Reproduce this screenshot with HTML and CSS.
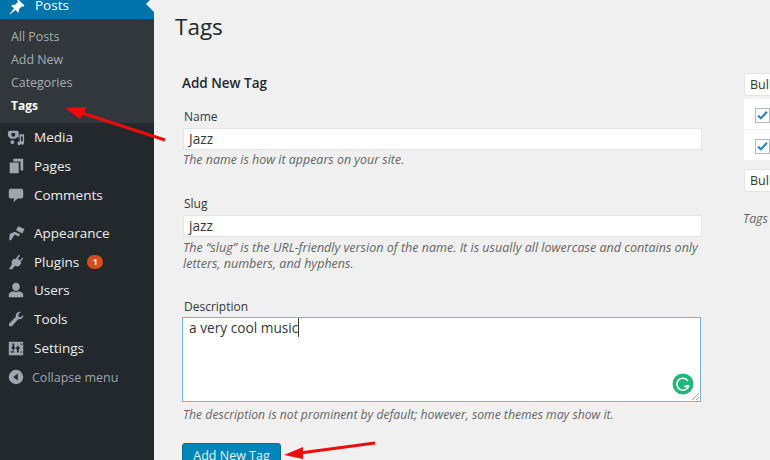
FILE: index.html
```html
<!DOCTYPE html>
<html lang="en">
<head>
<meta charset="utf-8">
<title>Tags</title>
<link rel="stylesheet" href="styles.css">
</head>
<body>
<div class="page">
  <nav class="sidebar">
    <div class="current">
      <svg class="icon pin" viewBox="0 0 20 20"><path fill="#fff" d="M10.400 1.600l8 8-1.400 1.100-1.500-.5-3.300 3.300c.4 1.600.1 3-.8 4.100l-3.200-3.200-5.700 4.800-.6-.6 4.800-5.700-3.200-3.200c1.100-.9 2.500-1.200 4.100-.8l3.300-3.300-.5-1.500z"/></svg>
      <span>Posts</span>
      <i class="notch"></i>
    </div>
    <ul class="submenu">
      <li>All Posts</li>
      <li>Add New</li>
      <li>Categories</li>
      <li class="on">Tags</li>
    </ul>
    <ul class="menu">
      <li><svg class="icon" viewBox="0 0 20 20"><path fill-rule="evenodd" d="M2 3h10l1 2v5.500H10.500A3 3 0 0 1 8 12H4L1 9V5zm5 2.200a2.300 2.300 0 1 0 0 4.600 2.300 2.300 0 0 0 0-4.600z"/><path d="M6 13.500a2.200 2.200 0 1 1-.1 4.400 2.200 2.200 0 0 1 .1-4.400zM14 7h5v9.500a2 2 0 1 1-1.500-1.900V9.500h-2v7.500a2 2 0 1 1-1.500-1.900z"/></svg><span>Media</span></li>
      <li><svg class="icon" viewBox="0 0 20 20"><path d="M7 2h11v13h-3V5H7zM3 6h10v12H3z"/></svg><span>Pages</span></li>
      <li class="gap"><svg class="icon" viewBox="0 0 20 20"><path d="M4 3h12a2 2 0 0 1 2 2v7a2 2 0 0 1-2 2h-4l-5 4 1-4H4a2 2 0 0 1-2-2V5a2 2 0 0 1 2-2z"/></svg><span>Comments</span></li>
      <li><svg class="icon" viewBox="0 0 20 20"><path d="M12.500 2.500l7 3-2.500 5-7-3.500zM8.500 8.500l6 3-1.500 2.500-4.500-2.200L4.500 18H2.500L3 11z"/></svg><span>Appearance</span></li>
      <li><svg class="icon" viewBox="0 0 20 20"><path d="M13 2l1.500 1-2.500 3.500 2.500 1.800L17 5l1 1.200-3 3.800 1 1-2 3c-1.500 1.200-3.500 1.200-5 .3L5.500 18H2l3.500-5.500c-.7-1.800-.4-3.500.8-5l2-1.500 1.200 1z"/></svg><span>Plugins</span><b class="badge">1</b></li>
      <li><svg class="icon" viewBox="0 0 20 20"><path d="M10 2a4.200 4.200 0 0 1 4.200 4.500c0 2.300-1.500 4.500-4.200 4.500S5.800 8.800 5.800 6.500A4.200 4.200 0 0 1 10 2zM7 11.500c1.800 1 4.200 1 6 0 2.700.6 5 1.800 5 3.500v3H2v-3c0-1.700 2.300-2.900 5-3.500z"/></svg><span>Users</span></li>
      <li><svg class="icon" viewBox="0 0 20 20"><path d="M18 5.500c.4 2-1 4.500-3.500 4.700-.8.100-1.300 0-1.800-.2L6 17.500c-1 1-2.500 1-3.300.1-.9-.9-.8-2.300.2-3.200L10 7.300c-.3-.8-.3-1.700.1-2.700C11 2.500 13 1.500 15.500 2l-3 3 .5 2.500 2.300.5z"/></svg><span>Tools</span></li>
      <li><svg class="icon" viewBox="0 0 20 20"><path fill-rule="evenodd" d="M2 3h16v15H2zM6 5v4H4.500L7 13l2.500-4H8V5zm7 10v-4h1.500L12 7l-2.500 4H11v4zM4 15h4v-1.500H4zM15 5h2v1.500h-2zm0 9v1h2v-1z"/></svg><span>Settings</span></li>
      <li class="collapse"><svg class="icon" viewBox="0 0 20 20"><path fill-rule="evenodd" d="M10 2a8 8 0 1 1 0 16 8 8 0 0 1 0-16zm2 4L7 10l5 4z"/></svg><span>Collapse menu</span></li>
    </ul>
  </nav>
  <main class="content">
    <h1 class="title">Tags</h1>
    <div class="columns">
      <form class="form">
        <h2 class="form-title">Add New Tag</h2>
        <div class="field name">
          <label class="label">Name</label>
          <div class="input">Jazz</div>
          <p class="help">The name is how it appears on your site.</p>
        </div>
        <div class="field slug">
          <label class="label">Slug</label>
          <div class="input">jazz</div>
          <p class="help">The “slug” is the URL-friendly version of the name. It is usually all lowercase and contains only letters, numbers, and hyphens.</p>
        </div>
        <div class="field desc">
          <label class="label">Description</label>
          <div class="textarea">
            <span class="typed">a very cool music</span>
            <svg class="grammarly" viewBox="0 0 22 22"><circle cx="11" cy="11" r="10.500" fill="#1fb77c"/><path d="M16 8a6 6 0 1 0 .5 5.500H12" fill="none" stroke="#fff" stroke-width="1.600"/><path d="M13.500 12l3.500 0v3.500z" fill="#fff"/></svg>
            <svg class="grip" viewBox="0 0 9 9"><path d="M1 8l7-7M5 8l3-3" stroke="#9a9a9a" fill="none"/></svg>
          </div>
          <p class="help">The description is not prominent by default; however, some themes may show it.</p>
        </div>
        <div class="button">Add New Tag</div>
      </form>
      <aside class="side">
        <div class="bulk">Bulk</div>
        <div class="row"><i class="check"><svg viewBox="0 0 16 16"><path d="M2.500 8l3.500 3.500 7.500-8" fill="none" stroke="#1e8cbe" stroke-width="2.600"/></svg></i></div>
        <div class="row"><i class="check"><svg viewBox="0 0 16 16"><path d="M2.500 8l3.500 3.500 7.500-8" fill="none" stroke="#1e8cbe" stroke-width="2.600"/></svg></i></div>
        <div class="bulk lower">Bulk</div>
        <p class="help tags-note">Tags</p>
      </aside>
    </div>
  </main>
  <svg class="arrows" viewBox="0 0 770 460">
    <path d="M165 140L82 113" stroke="#f00a0a" stroke-width="3" fill="none"/>
    <path d="M65 108L87 107L80 119z" fill="#f00a0a"/>
    <path d="M375 443L300 453" stroke="#f00a0a" stroke-width="3" fill="none"/>
    <path d="M284 455L303 447L303 459z" fill="#f00a0a"/>
  </svg>
</div>
</body>
</html>
```
FILE: styles.css
```css
* { box-sizing: border-box; }
html, body { margin: 0; height: 100%; overflow: hidden; }
body { background: #f0f0f0; font-family: "Open Sans", sans-serif; color: #444; }
.page { position: relative; display: flex; width: 770px; height: 460px; overflow: hidden; }

.sidebar { flex: 0 0 154px; background: #23282d; display: flex; flex-direction: column; color: #eee; font-size: 13.500px; }
.current { position: relative; height: 19px; background: #0073aa; color: #fff; display: flex; align-items: center; padding: 0 0 0 8px; gap: 9px; }
.current span { line-height: 20px; transform: translateY(-5px); }
.icon { flex: none; width: 18px; height: 18px; fill: #a0a5aa; }
.pin { transform: translateY(-4px); }
.notch { position: absolute; right: 0; top: -4px; border: 8px solid transparent; border-right-color: #f0f0f0; border-left-width: 0; }

.submenu { list-style: none; margin: 0; padding: 7px 0 0 11px; height: 104px; background: #32373c; color: #a9adb1; font-size: 12.400px; }
.submenu li { height: 22.900px; line-height: 22.900px; }
.submenu .on { color: #fff; font-weight: 700; font-size: 12px; }

.menu { list-style: none; margin: 0; padding: 0; }
.menu li { display: flex; align-items: center; gap: 9px; height: 28.700px; padding-left: 7px; }
.menu li.gap { margin-bottom: 9.500px; }
.menu .collapse { color: #a0a5aa; font-size: 12.500px; gap: 7px; margin-top: 1px; }
.badge { width: 16px; height: 14px; margin-left: -1px; border-radius: 8px; background: #d54e21; color: #fff; font-size: 8px; line-height: 14px; text-align: center; }

.content { flex: 1; min-width: 0; padding: 0 0 0 22px; }
.title { margin: 0 0 0 -1px; padding-top: 10px; font-size: 22.500px; font-weight: 400; line-height: 33px; color: #23282d; }
.columns { display: flex; margin-top: 31px; }
.form { flex: 0 0 526px; margin-left: 6px; }
.form-title { margin: 0 0 16px; font-size: 13.500px; font-weight: 600; line-height: 18px; color: #23282d; }
.label { display: block; margin-left: 2px; font-size: 12px; line-height: 18px; color: #32373c; }
.input { width: 519px; height: 22px; margin: 2px 0 0 1px; border: 1px solid #e4e4e4; background: #fff; padding: 0 5px; font-size: 13.700px; line-height: 20px; color: #32373c; }
.help { margin: 3px 0 0 1px; font-size: 12.300px; font-style: italic; line-height: 16px; color: #666; }
.name .help { margin-top: 2px; font-size: 12.450px; }
.slug { margin-top: 27px; }
.slug .help { font-size: 12.550px; }
.desc { margin-top: 26px; }
.textarea { position: relative; width: 519px; height: 85px; margin-top: 1px; border: 1.500px solid #7ab1df; background: #fff; padding: 0 6px; font-size: 13.700px; line-height: 20px; color: #32373c; }
.typed { border-right: 1px solid #32373c; }
.grammarly { position: absolute; right: 6px; bottom: 6px; width: 22px; height: 22px; }
.grip { position: absolute; right: 0; bottom: 0; width: 9px; height: 9px; }
.desc .help { margin-top: 5px; font-size: 12.200px; }
.button { width: 99px; height: 30px; margin-top: 20px; border-radius: 3px; background: #0085ba; border: 1px solid #006799; color: #e8f3f8; font-size: 12.500px; line-height: 23px; text-align: center; }

.side { flex: 1; margin-left: 36px; margin-top: -1px; }
.bulk { height: 23px; border: 1px solid #e4e4e4; border-right: 0; background: #fff; padding-left: 5px; font-size: 12.500px; line-height: 22px; color: #32373c; }
.lower { margin-top: 9px; }
.row { height: 30px; margin-top: 3px; background: #fff; padding: 9px 0 0 11px; }
.row + .row { margin-top: 1px; }
.check { display: block; width: 15px; height: 15px; border: 1px solid #b4b9be; background: #fff; }
.check svg { display: block; width: 13px; height: 13px; }
.tags-note { margin: 19px 0 0 -1px; }

.arrows { position: absolute; left: 0; top: 0; width: 770px; height: 460px; pointer-events: none; }
```
